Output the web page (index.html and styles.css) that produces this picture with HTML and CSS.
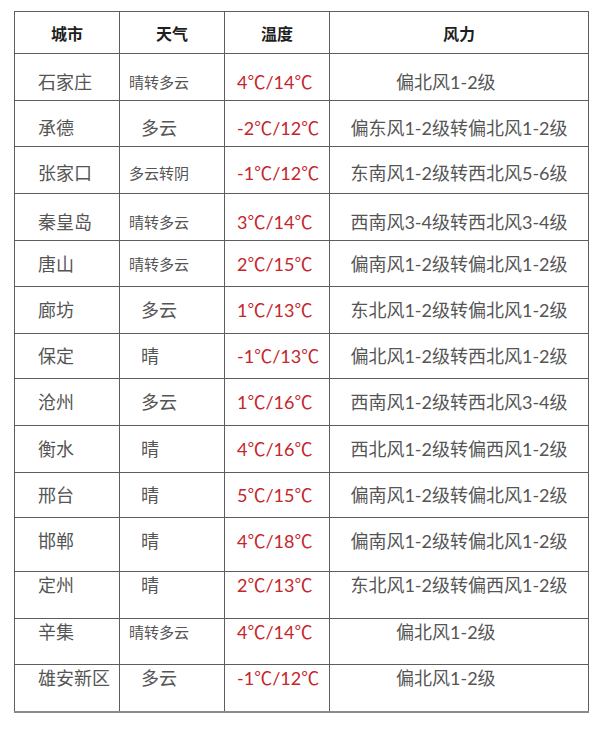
FILE: index.html
```html
<!DOCTYPE html>
<html lang="zh-CN">
<head>
<meta charset="utf-8">
<title>河北天气</title>
<link rel="stylesheet" href="styles.css">
</head>
<body>
<div class="page">
<table class="weather">
  <colgroup>
    <col class="c-city"><col class="c-wx"><col class="c-temp"><col class="c-wind">
  </colgroup>
  <thead>
    <tr class="head"><th>城市</th><th>天气</th><th>温度</th><th>风力</th></tr>
  </thead>
  <tbody>
    <tr class="r47 low"><td class="city">石家庄</td><td class="wx small">晴转多云</td><td class="temp">4℃/14℃</td><td class="wind short">偏北风1-2级</td></tr>
    <tr class="r46 low"><td class="city">承德</td><td class="wx big">多云</td><td class="temp">-2℃/12℃</td><td class="wind">偏东风1-2级转偏北风1-2级</td></tr>
    <tr class="r47 low2"><td class="city">张家口</td><td class="wx small">多云转阴</td><td class="temp">-1℃/12℃</td><td class="wind">东南风1-2级转西北风5-6级</td></tr>
    <tr class="r47 low"><td class="city">秦皇岛</td><td class="wx small">晴转多云</td><td class="temp">3℃/14℃</td><td class="wind">西南风3-4级转西北风3-4级</td></tr>
    <tr class="r46"><td class="city">唐山</td><td class="wx small">晴转多云</td><td class="temp">2℃/15℃</td><td class="wind">偏南风1-2级转偏北风1-2级</td></tr>
    <tr class="r47"><td class="city">廊坊</td><td class="wx big">多云</td><td class="temp">1℃/13℃</td><td class="wind">东北风1-2级转偏北风1-2级</td></tr>
    <tr class="r45"><td class="city">保定</td><td class="wx big">晴</td><td class="temp">-1℃/13℃</td><td class="wind">偏北风1-2级转西北风1-2级</td></tr>
    <tr class="r47"><td class="city">沧州</td><td class="wx big">多云</td><td class="temp">1℃/16℃</td><td class="wind">西南风1-2级转西北风3-4级</td></tr>
    <tr class="r47"><td class="city">衡水</td><td class="wx big">晴</td><td class="temp">4℃/16℃</td><td class="wind">西北风1-2级转偏西风1-2级</td></tr>
    <tr class="r45"><td class="city">邢台</td><td class="wx big">晴</td><td class="temp">5℃/15℃</td><td class="wind">偏南风1-2级转偏北风1-2级</td></tr>
    <tr class="r54 up"><td class="city">邯郸</td><td class="wx big">晴</td><td class="temp">4℃/18℃</td><td class="wind">偏南风1-2级转偏北风1-2级</td></tr>
    <tr class="r47 top"><td class="city">定州</td><td class="wx big">晴</td><td class="temp">2℃/13℃</td><td class="wind">东北风1-2级转偏西风1-2级</td></tr>
    <tr class="r46 top"><td class="city">辛集</td><td class="wx small">晴转多云</td><td class="temp">4℃/14℃</td><td class="wind short">偏北风1-2级</td></tr>
    <tr class="r47 top last"><td class="city">雄安新区</td><td class="wx big">多云</td><td class="temp">-1℃/12℃</td><td class="wind short">偏北风1-2级</td></tr>
  </tbody>
</table>
</div>
</body>
</html>
```

FILE: styles.css
```css
html, body {
  margin: 0;
  padding: 0;
  background: #ffffff;
}

.page {
  padding: 11px 0 0 14px;
}

.weather {
  border-collapse: collapse;
  table-layout: fixed;
  width: 574px;
  font-family: "Lato", "Noto Sans CJK SC", sans-serif;
  color: #555555;
}

.c-city { width: 105px; }
.c-wx { width: 105px; }
.c-temp { width: 105px; }
.c-wind { width: 259px; }

.weather th,
.weather td {
  border: 1px solid #5e5e5e;
  padding: 0;
  vertical-align: middle;
  white-space: nowrap;
  overflow: hidden;
  line-height: 20px;
}

.weather .head { height: 42px; }

.weather .head th {
  font-family: "Noto Sans CJK SC", sans-serif;
  font-weight: 700;
  font-size: 16px;
  color: #1f1f1f;
  text-align: center;
}

.weather .r45 { height: 45px; }
.weather .r46 { height: 46px; }
.weather .r47 { height: 47px; }
.weather .r54 { height: 54px; }

.weather .low td { padding-top: 9px; }
.weather .low2 td { padding-top: 5px; }
.weather .up td { padding-bottom: 8px; }
.weather .top td { padding-bottom: 20px; }

.weather .last td { border-bottom: 2px solid #8a8a8a; }

.weather .city {
  font-size: 18px;
  padding-left: 23px;
  text-align: left;
}

.weather .wx {
  text-align: left;
}

.weather .wx.small {
  font-size: 15px;
  padding-left: 9px;
}

.weather .wx.big {
  font-size: 18px;
  padding-left: 21px;
}

.weather .temp {
  font-size: 18px;
  color: #c4262c;
  padding-left: 12px;
  text-align: left;
}

.weather .wind {
  font-size: 18px;
  text-align: center;
}

.weather .wind.short {
  text-align: left;
  padding-left: 66px;
}
```
